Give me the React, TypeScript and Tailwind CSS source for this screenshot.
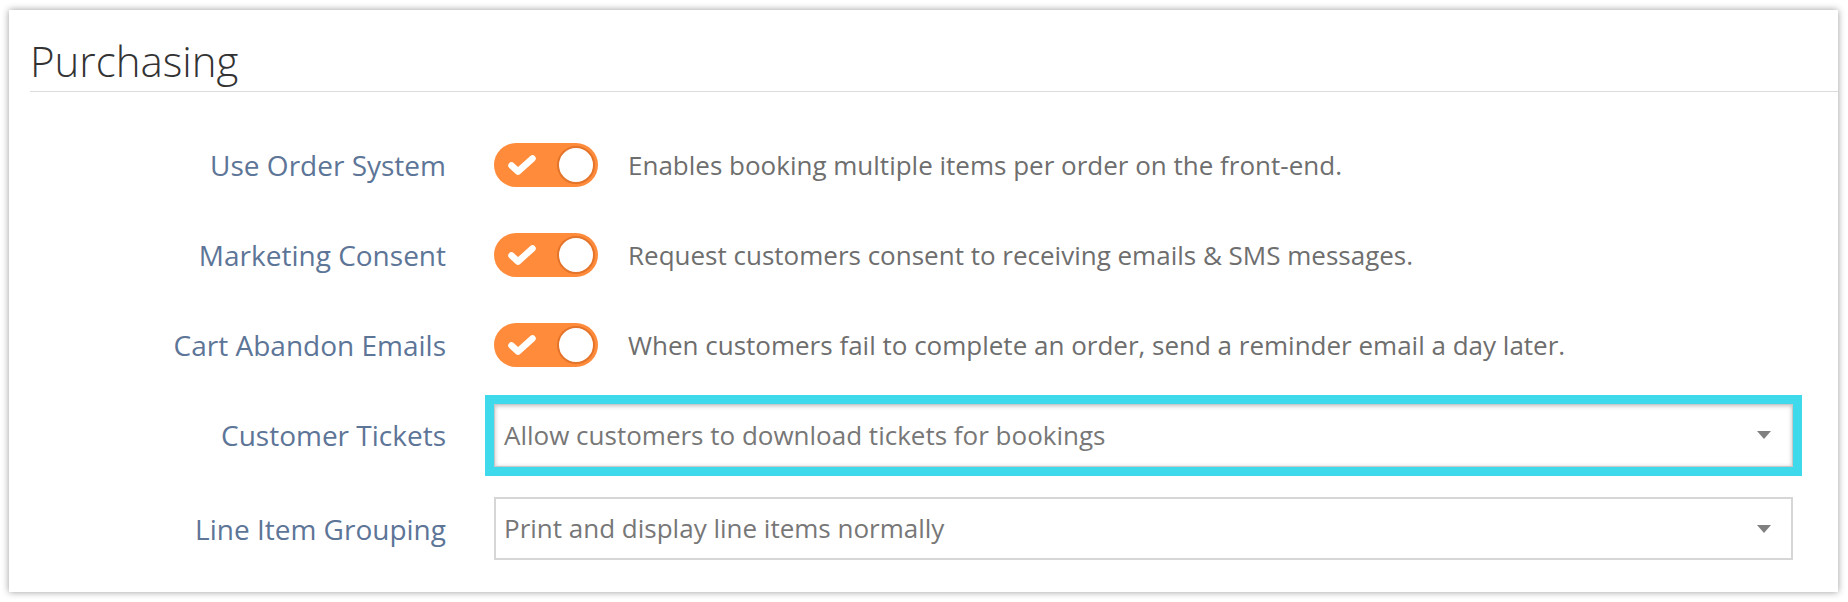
import React from "react";

interface ToggleRow {
  label: string;
  description: string;
}

const toggles: ToggleRow[] = [
  { label: "Use Order System", description: "Enables booking multiple items per order on the front-end." },
  { label: "Marketing Consent", description: "Request customers consent to receiving emails & SMS messages." },
  { label: "Cart Abandon Emails", description: "When customers fail to complete an order, send a reminder email a day later." },
];

const Toggle = () => (
  <div className="relative flex h-[44px] w-[104px] shrink-0 items-center rounded-full bg-[#ff8b3b]">
    <svg width="30" height="22" viewBox="0 0 30 22" className="ml-[13px]">
      <path d="M4.5 11.5 L11 17.5 L25.5 4.5" fill="none" stroke="#fff" strokeWidth="6.5" strokeLinecap="round" strokeLinejoin="round" />
    </svg>
    <div className="absolute right-[3px] top-[3px] h-[38px] w-[38px] rounded-full border-2 border-[#e4742a] bg-white" />
  </div>
);

const Caret = () => (
  <svg width="14" height="8" viewBox="0 0 14 8" className="shrink-0">
    <path d="M0 0 L14 0 L7 8 Z" fill="#808080" />
  </svg>
);

const Select = ({ value, focused }: { value: string; focused?: boolean }) => (
  <div
    className={
      focused
        ? "flex h-[63px] w-[1299px] items-center justify-between border border-[#c8c8c8] bg-white pl-[9px] pr-[21px] shadow-[inset_0_1px_4px_rgba(0,0,0,0.25)] outline-[9px] outline-solid outline-[#3fd9ec]"
        : "flex h-[63px] w-[1299px] items-center justify-between border-2 border-[#d6d6d6] bg-white pl-[8px] pr-[20px]"
    }
  >
    <span className="text-[26px] text-[#777]">{value}</span>
    <Caret />
  </div>
);

const Label = ({ children }: { children: React.ReactNode }) => (
  <div className="w-[437px] shrink-0 text-right text-[28px] text-[#5d7597]">{children}</div>
);

export default function App() {
  return (
    <div className="min-h-[602px] bg-white pl-[9px] pt-[10px]" style={{ fontFamily: '"Open Sans", sans-serif' }}>
      <div className="h-[582px] w-[1829px] bg-white shadow-[0_0_7px_rgba(0,0,0,0.4)]">
        <div className="ml-[21px] border-b border-[#dcdcdc] pb-[2px] pt-[23px]">
          <h1 className="text-[42px] font-light leading-[56px] text-[#333]">Purchasing</h1>
        </div>
        <div className="pt-[28px]">
          {toggles.map((t) => (
            <div key={t.label} className="flex h-[90px] items-center">
              <Label>{t.label}</Label>
              <div className="ml-[48px] flex items-center gap-[30px]">
                <Toggle />
                <span className="text-[26px] text-[#6e6e6e]">{t.description}</span>
              </div>
            </div>
          ))}
          <div className="flex h-[90px] items-center">
            <Label>Customer Tickets</Label>
            <div className="ml-[48px]">
              <Select value="Allow customers to download tickets for bookings" focused />
            </div>
          </div>
          <div className="flex h-[90px] items-center pt-[7px]">
            <Label>Line Item Grouping</Label>
            <div className="ml-[48px]">
              <Select value="Print and display line items normally" />
            </div>
          </div>
        </div>
      </div>
    </div>
  );
}
